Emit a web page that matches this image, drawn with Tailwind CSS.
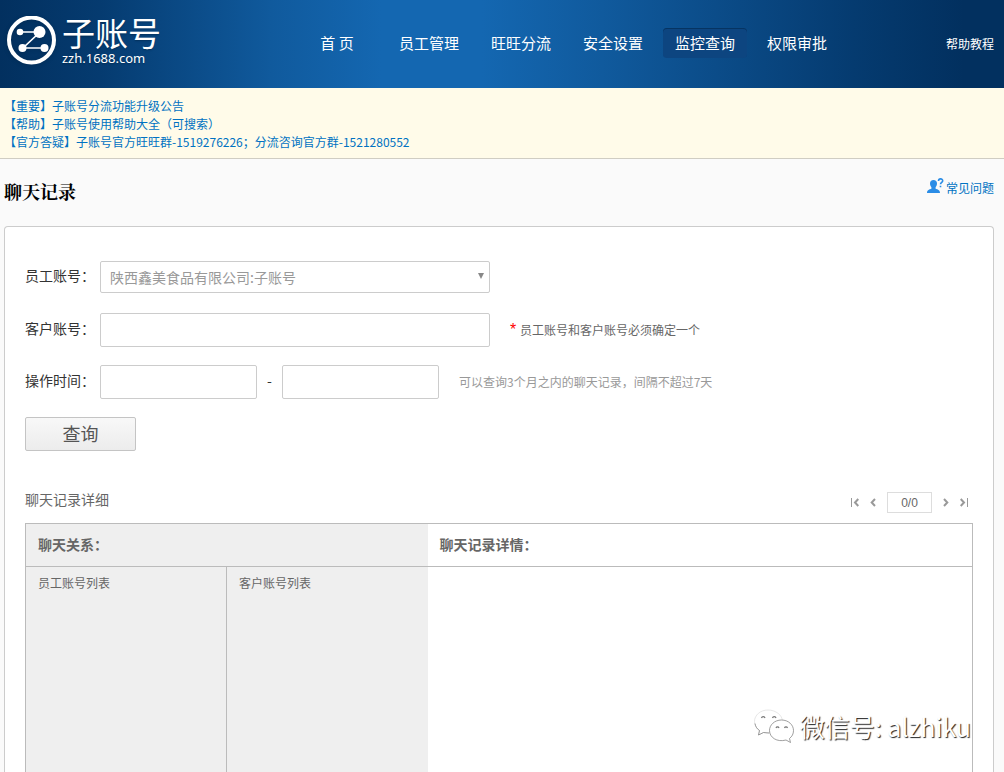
<!DOCTYPE html>
<html lang="zh-CN">
<head>
<meta charset="utf-8">
<title>子账号 - 聊天记录</title>
<script src="https://cdn.jsdelivr.net/npm/@tailwindcss/browser@4"></script>
</head>
<body class="bg-[#fafafa]">
<div class="relative flex h-screen flex-col overflow-hidden font-['Noto_Sans_CJK_SC',sans-serif] text-xs text-[#666]">

  <header class="flex h-22 shrink-0 items-start bg-[linear-gradient(to_right,#02305f,#053b70_10%,#105a9d_27%,#1467b1_38%,#1467b1_48%,#105a9d_60%,#053b70_85%,#02305f_96%)] pr-2.5 text-white">
    <a href="#" class="flex w-[295px] gap-1.5 pt-4 pl-1.5">
      <svg class="size-[50px] drop-shadow-sm" viewBox="0 0 50 50" fill="none" stroke="white">
        <circle cx="25.500" cy="24" r="22.500" stroke-width="4"/>
        <path d="M14 16H34L17 32H39" stroke-width="1.600"/>
        <g fill="white" stroke="none">
          <circle cx="14" cy="16" r="3.300"/><circle cx="33.500" cy="16" r="6"/>
          <circle cx="16.500" cy="32" r="4"/><circle cx="38.500" cy="32" r="4"/>
        </g>
      </svg>
      <span class="flex flex-col gap-0.5 text-shadow-sm">
        <span class="text-[33px] leading-8">子账号</span>
        <span class="text-[13px] leading-4 font-['Noto_Sans',sans-serif]">zzh.1688.com</span>
      </span>
    </a>
    <nav class="flex gap-2 pt-7 text-center text-[15px] leading-[30px]">
      <a href="#" class="w-21">首 页</a>
      <a href="#" class="w-21">员工管理</a>
      <a href="#" class="w-21">旺旺分流</a>
      <a href="#" class="w-21">安全设置</a>
      <a href="#" class="w-21 rounded-sm bg-[#0d4580] inset-shadow-2xs inset-shadow-[#063462]">监控查询</a>
      <a href="#" class="w-21">权限审批</a>
    </nav>
    <a href="#" class="ml-auto pt-9 leading-4">帮助教程</a>
  </header>

  <section class="flex shrink-0 flex-col items-start border-b border-[#d0cdc3] bg-[#fffbe9] px-1 pt-[9px] pb-[7px] leading-[18px] text-[#0072c2]">
    <a href="#">【重要】子账号分流功能升级公告</a>
    <a href="#">【帮助】子账号使用帮助大全（可搜索）</a>
    <a href="#">【官方答疑】子账号官方旺旺群-1519276226；分流咨询官方群-1521280552</a>
  </section>

  <div class="flex h-[67px] shrink-0 items-start justify-between pr-2.5 pl-1">
    <h1 class="pt-5 font-['Noto_Serif_CJK_SC','Noto_Sans_CJK_SC',serif] text-lg leading-6 font-bold text-black">聊天记录</h1>
    <a href="#" class="flex gap-0.5 pt-[19px] leading-5 text-[#0072c2]">
      <svg class="h-4 w-[17px]" viewBox="0 0 17 16" fill="#2a8ce6">
        <path d="M6.500 2C8.700 2 10 3.500 10 5.500C10 7.500 9.200 8.500 8.600 9.200V10.700C10.500 11.500 13 11.600 13 15H0C0 11.600 2.500 11.500 4.400 10.700V9.200C3.800 8.500 3 7.500 3 5.500C3 3.500 4.300 2 6.500 2Z"/>
        <path d="M11.500 3C11.500 .2 15.700 .2 15.700 2.700C15.700 4.500 13.500 4.200 13.500 6.300M13.500 7.700V9.300" fill="none" stroke="#2a8ce6" stroke-width="1.600"/>
      </svg>
      <span>常见问题</span>
    </a>
  </div>

  <main class="mr-2.5 ml-1 flex-1 overflow-hidden rounded-t-sm border border-b-0 border-[#ccc] bg-white px-5 pt-[34px]">
    <form class="flex flex-col text-sm text-[#333]">
      <div class="flex h-8 items-center">
        <label for="staff" class="w-[75px] pb-1">员工账号：</label>
        <div class="relative w-[390px]">
          <select id="staff" class="h-8 w-full appearance-none rounded-xs border border-[#ccc] bg-white px-[9px] text-[#999]">
            <option>陕西鑫美食品有限公司:子账号</option>
          </select>
          <svg class="pointer-events-none absolute top-3 right-1.5 size-1.5" viewBox="0 0 7 7" fill="#888"><path d="M0 0H7L3.500 7Z"/></svg>
        </div>
      </div>
      <div class="mt-5 flex h-[34px] items-center">
        <label for="client" class="w-[75px] pb-1">客户账号：</label>
        <input id="client" type="text" class="h-full w-[390px] rounded-xs border border-[#ccc] bg-white px-2">
        <p class="ml-5 flex items-center text-xs text-[#666]"><span class="w-2.5 font-['Liberation_Sans',sans-serif] text-base text-[#f00]">*</span>员工账号和客户账号必须确定一个</p>
      </div>
      <div class="mt-[18px] flex h-[34px] items-center">
        <label for="from" class="w-[75px] pb-1">操作时间：</label>
        <input id="from" type="text" class="h-full w-[157px] rounded-xs border border-[#ccc] bg-white px-2">
        <span class="w-[25px] pb-1 text-center">-</span>
        <input type="text" aria-label="结束时间" class="h-full w-[157px] rounded-xs border border-[#ccc] bg-white px-2">
        <p class="ml-5 text-xs text-[#999]">可以查询3个月之内的聊天记录，间隔不超过7天</p>
      </div>
      <button type="button" class="mt-[18px] h-[34px] w-[111px] rounded-xs border border-[#c4c4c4] bg-linear-to-b from-[#f8f8f8] to-[#ececec] pb-0.5 text-lg leading-7 text-[#555]">查询</button>
    </form>

    <div class="mt-[34px] mb-2.5 flex h-7 items-center justify-between">
      <h2 class="text-sm leading-6">聊天记录详细</h2>
      <div class="flex items-center gap-[11px] pt-1.5 pr-[5px]">
        <button type="button" aria-label="首页"><svg class="block h-[9px] w-2" viewBox="0 0 8 9" fill="none" stroke="#999"><path d="M.5 0V9"/><path d="M7.300 1L4 4.500L7.300 8" stroke-width="2"/></svg></button>
        <button type="button" aria-label="上一页"><svg class="block h-[9px] w-1.5" viewBox="0 0 6 9" fill="none" stroke="#999" stroke-width="2"><path d="M5 1L1.700 4.500L5 8"/></svg></button>
        <span class="h-[21px] w-[45px] border border-[#ddd] text-center font-['Liberation_Sans',sans-serif] leading-5">0/0</span>
        <button type="button" aria-label="下一页"><svg class="block h-[9px] w-1.5" viewBox="0 0 6 9" fill="none" stroke="#999" stroke-width="2"><path d="M1 1L4.300 4.500L1 8"/></svg></button>
        <button type="button" aria-label="末页"><svg class="block h-[9px] w-2" viewBox="0 0 8 9" fill="none" stroke="#999"><path d="M7.500 0V9"/><path d="M.7 1L4 4.500L.7 8" stroke-width="2"/></svg></button>
      </div>
    </div>

    <table class="w-full table-fixed border-collapse border border-[#bbb] text-left">
      <colgroup><col class="w-[201px]"><col class="w-[201px]"><col></colgroup>
      <thead>
        <tr class="h-[43px] border-b border-[#bbb] text-sm">
          <th colspan="2" class="bg-[#efefef] pb-0.5 pl-3 font-bold">聊天关系：</th>
          <th class="pb-0.5 pl-3 font-bold">聊天记录详情：</th>
        </tr>
      </thead>
      <tbody>
        <tr class="h-[400px] align-top">
          <td class="border-r border-[#bbb] bg-[#efefef] pt-2 pl-3 leading-4">员工账号列表</td>
          <td class="bg-[#efefef] pt-2 pl-3 leading-4">客户账号列表</td>
          <td></td>
        </tr>
      </tbody>
    </table>
  </main>

  <div class="absolute right-[33px] bottom-[26px] flex items-center gap-1.5 text-[25px] leading-10 text-white [text-shadow:1px_1px_1px_#222]">
    <svg class="h-[34px] w-10" viewBox="0 0 40 34" fill="white" stroke="#777" stroke-width=".7">
      <path d="M14 1C6.500 1 .5 6 .5 12.500C.5 16.500 2.500 19.500 5.500 21.500L4.500 26L9.500 23.500C18 25.500 28.500 22 28.500 12.500C28.500 6 21.500 1 14 1Z" stroke="#ddd"/>
      <path d="M1 14.500C1.500 17.500 3 20 5.500 21.500L4.500 26L9.500 23.500L15 24" fill="none"/>
      <path d="M27.500 11C20.500 11 15.500 16 15.500 21.500C15.500 28.500 23 33.500 32 31L36.500 33.500L35.500 29.500C38 27.500 39.500 25 39.500 21.500C39.500 16 34.500 11 27.500 11Z"/>
      <path d="M7.500 9A1.800 1.800 0 0 1 11 9M18.500 9A1.800 1.800 0 0 1 22 9M22 19A1.600 1.600 0 0 1 25 19M30.500 19A1.600 1.600 0 0 1 33.500 19" fill="none" stroke-width="1.200"/>
    </svg>
    <span>微信号: alzhiku</span>
  </div>
</div>
</body>
</html>
